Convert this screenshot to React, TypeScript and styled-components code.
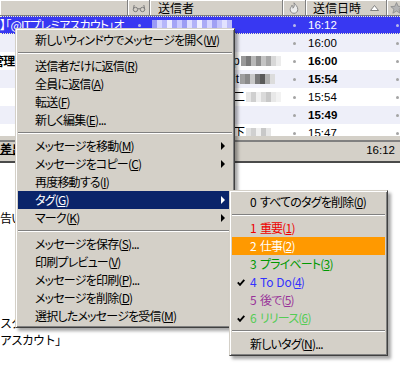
import React from "react";
import styled, { createGlobalStyle } from "styled-components";

const GlobalStyle = createGlobalStyle`
  html, body { margin: 0; padding: 0; background: #fff; }
  body { font-family: "Noto Sans CJK JP", "Noto Sans", sans-serif; }
`;

const COLS = "128px 22px 133px 23px 81px 20px";

const Screen = styled.div`
  position: relative;
  width: 400px;
  height: 372px;
  overflow: hidden;
  background: #fff;
  display: flex;
  flex-direction: column;
`;

const ThreadPane = styled.div`
  flex: none;
  height: 136px;
  overflow: hidden;
`;

const HeaderBar = styled.div`
  display: grid;
  grid-template-columns: ${COLS};
  height: 16px;
  box-sizing: border-box;
  background: #d4d0c8;
  border-bottom: 1px solid #808080;
`;

const HeaderCell = styled.div<{ $pad?: string; $justify?: string }>`
  display: flex;
  align-items: center;
  justify-content: ${(p) => p.$justify || "flex-start"};
  padding: ${(p) => p.$pad || "0 6px"};
  box-sizing: border-box;
  border-right: 1px solid #808080;
  box-shadow: inset 1px 1px 0 #fff;
  font-size: 12px;
  line-height: 15px;
  color: #000;
  white-space: nowrap;
  overflow: hidden;
`;

const Row = styled.div<{ $selected?: boolean; $tint?: boolean }>`
  display: grid;
  grid-template-columns: ${COLS};
  height: 18px;
  box-sizing: border-box;
  align-items: center;
  background: ${(p) => (p.$selected ? "#3838f2" : p.$tint ? "#eeeff9" : "#fff")};
  color: ${(p) => (p.$selected ? "#fff" : "#000")};
  border-top: 1px dotted ${(p) => (p.$selected ? "#f4f4c8" : "transparent")};
  border-bottom: 1px dotted ${(p) => (p.$selected ? "#f4f4c8" : "transparent")};
`;

const SubjectCell = styled.div<{ $bold?: boolean }>`
  overflow: hidden;
  white-space: nowrap;
  font-size: 12px;
  line-height: 16px;
  letter-spacing: -0.8px;
  font-weight: ${(p) => (p.$bold ? 700 : 400)};
  font-feature-settings: "palt";
`;

const SubjectText = styled.span<{ $shift?: number }>`
  display: inline-block;
  margin-left: ${(p) => p.$shift || 0}px;
`;

const DotCell = styled.div`
  display: flex;
  justify-content: center;
  align-items: center;
`;

const Dot = styled.span<{ $onBlue?: boolean }>`
  width: 3px;
  height: 3px;
  border-radius: 50%;
  background: ${(p) => (p.$onBlue ? "#b8b8e8" : "#a4a4a4")};
`;

const SenderCell = styled.div`
  display: flex;
  align-items: center;
  padding-left: 2px;
  overflow: hidden;
  white-space: nowrap;
  font-family: "Liberation Sans", "Noto Sans CJK JP", sans-serif;
  font-size: 12px;
  line-height: 16px;
`;

const Mosaic = styled.span`
  display: inline-flex;
  height: 10px;
`;

const Tile = styled.span<{ $c: string }>`
  width: 5px;
  height: 10px;
  background: ${(p) => p.$c};
`;

const SenderLetter = styled.span`
  color: #000;
  padding: 0 1px;
`;

const TimeCell = styled.div<{ $bold?: boolean }>`
  padding-left: 2px;
  font-family: "Liberation Sans", Arial, sans-serif;
  font-size: 11.5px;
  line-height: 16px;
  font-weight: ${(p) => (p.$bold ? 700 : 400)};
`;

const Splitter = styled.div`
  flex: none;
  height: 4px;
  background: #d4d0c8;
`;

const MessageHeader = styled.div`
  flex: none;
  height: 23px;
  box-sizing: border-box;
  background: #d4d0c8;
  border-top: 2px solid #808080;
  border-bottom: 2px solid #4a4a4a;
  display: flex;
  justify-content: space-between;
  align-items: flex-start;
`;

const FieldLabel = styled.span`
  font-size: 12px;
  font-weight: 700;
  line-height: 11px;
  padding-top: 1px;
  padding-right: 30px;
  border-bottom: 1px solid #000;
`;

const HeaderDate = styled.span`
  font-family: "Liberation Sans", Arial, sans-serif;
  font-size: 11.5px;
  line-height: 16px;
  padding: 0 5px 0 0;
`;

const MessageBody = styled.div`
  flex: 1;
  background: #fff;
  padding-top: 46px;
  font-size: 12px;
  line-height: 17px;
  letter-spacing: -1px;
  white-space: nowrap;
`;

const Para = styled.p<{ $gap?: number }>`
  margin: ${(p) => p.$gap || 0}px 0 0 0;
`;

/* ---------- menus ---------- */

const Menu = styled.div<{ $left: number; $top: number; $width: number }>`
  position: absolute;
  left: ${(p) => p.$left}px;
  top: ${(p) => p.$top}px;
  width: ${(p) => p.$width}px;
  box-sizing: border-box;
  padding: 2px;
  background: #d4d0c8;
  border: 1px solid;
  border-color: #d4d0c8 #404040 #404040 #d4d0c8;
  box-shadow: inset 1px 1px 0 #fff, inset -1px -1px 0 #808080,
    3px 3px 3px rgba(0, 0, 0, 0.35);
  font-family: "Noto Sans CJK JP", sans-serif;
  font-size: 12px;
  font-feature-settings: "palt";
  letter-spacing: -0.8px;
  line-height: 18px;
  color: #000;
`;

const Item = styled.div<{ $active?: boolean }>`
  display: flex;
  align-items: center;
  height: 18px;
  padding: 0 7px 0 17px;
  background: ${(p) => (p.$active ? "#0a246a" : "transparent")};
  color: ${(p) => (p.$active ? "#fff" : "#000")};
  white-space: nowrap;
`;

const ItemLabel = styled.span`
  flex: 1;
`;

const Arrow = styled.span<{ $light?: boolean }>`
  width: 0;
  height: 0;
  border-left: 4px solid ${(p) => (p.$light ? "#fff" : "#000")};
  border-top: 4px solid transparent;
  border-bottom: 4px solid transparent;
`;

const Separator = styled.div`
  margin: 3px 0;
  border-top: 1px solid #808080;
  border-bottom: 1px solid #fff;
`;

const TagItem = styled.div<{ $active?: boolean; $color: string }>`
  display: grid;
  grid-template-columns: 18px 1fr;
  align-items: center;
  height: 18px;
  background: ${(p) => (p.$active ? "#ff9900" : "transparent")};
  color: ${(p) => (p.$active ? "#fff" : p.$color)};
  white-space: nowrap;
`;

const TagNum = styled.span`
  margin-right: 4px;
`;

const Spaced = styled.span`
  letter-spacing: 0;
`;

const CheckSlot = styled.span`
  display: flex;
  justify-content: center;
  align-items: center;
`;

const Key = styled.u`
  text-underline-offset: 1px;
`;

/* ---------- icons ---------- */

const Glasses = () => (
  <svg width="14" height="10" viewBox="0 0 14 10">
    <g fill="none" stroke="#7c7c7c" strokeWidth="1">
      <circle cx="3.5" cy="6.5" r="2.2" />
      <circle cx="10.5" cy="6.5" r="2.2" />
      <path d="M5.7 6.2 Q7 4.8 8.3 6.2" />
      <path d="M1.3 6.3 L2.2 2" />
      <path d="M12.7 6.3 L11.8 2" />
    </g>
  </svg>
);

const Flame = () => (
  <svg width="10" height="12" viewBox="0 0 10 12">
    <path
      d="M5 0.8 C6.2 2.8 8.8 4.2 8.8 7.4 C8.8 9.8 7 11.3 5 11.3 C3 11.3 1.2 9.8 1.2 7.5 C1.2 5.6 2.6 4.8 3 3.2 C3.8 4.2 4 5 3.9 6.2 C5.2 5.2 5.6 3.2 5 0.8 Z"
      fill="#ececec"
      stroke="#8a8a8a"
      strokeWidth="1"
    />
  </svg>
);

const Star = () => (
  <svg width="13" height="12" viewBox="0 0 13 12">
    <polygon
      points="6.5,0.6 8.2,4.3 12.2,4.6 9.1,7.2 10.1,11.2 6.5,9 2.9,11.2 3.9,7.2 0.8,4.6 4.8,4.3"
      fill="#b4b4b4"
      stroke="#8a8a8a"
      strokeWidth="0.8"
    />
  </svg>
);

const SortUp = () => (
  <svg width="9" height="6" viewBox="0 0 9 6">
    <polygon points="0.5,5.5 4.5,0.5 8.5,5.5" fill="#fff" stroke="#808080" strokeWidth="1" />
  </svg>
);

const Check = () => (
  <svg width="8" height="7" viewBox="0 0 8 7">
    <path d="M0.8 3.4 L3 5.8 L7.3 0.9" fill="none" stroke="#000" strokeWidth="1.9" />
  </svg>
);

/* ---------- data ---------- */

type MenuEntry =
  | "sep"
  | { label: string; k: string; more?: boolean; sub?: boolean; active?: boolean };

const mainMenu: MenuEntry[] = [
  { label: "新しいウィンドウでメッセージを開く", k: "W" },
  "sep",
  { label: "送信者だけに返信", k: "R" },
  { label: "全員に返信", k: "A" },
  { label: "転送", k: "F" },
  { label: "新しく編集", k: "E", more: true },
  "sep",
  { label: "メッセージを移動", k: "M", sub: true },
  { label: "メッセージをコピー", k: "C", sub: true },
  { label: "再度移動する", k: "I" },
  { label: "タグ", k: "G", sub: true, active: true },
  { label: "マーク", k: "K", sub: true },
  "sep",
  { label: "メッセージを保存", k: "S", more: true },
  { label: "印刷プレビュー", k: "V" },
  { label: "メッセージを印刷", k: "P", more: true },
  { label: "メッセージを削除", k: "D" },
  { label: "選択したメッセージを受信", k: "M" },
];

type TagEntry =
  | "sep"
  | { num?: string; label: string; k: string; color: string; active?: boolean; checked?: boolean; more?: boolean };

const tagMenu: TagEntry[] = [
  { num: "0", label: "すべてのタグを削除", k: "0", color: "#000" },
  "sep",
  { num: "1", label: "重要", k: "1", color: "#ee0000" },
  { num: "2", label: "仕事", k: "2", color: "#ff9900", active: true },
  { num: "3", label: "プライベート", k: "3", color: "#009900" },
  { num: "4", label: "To Do", k: "4", color: "#3333ff", checked: true },
  { num: "5", label: "後で", k: "5", color: "#993399" },
  { num: "6", label: "リリース", k: "6", color: "#55cc55", checked: true },
  "sep",
  { label: "新しいタグ", k: "N", color: "#000", more: true },
];

const blueTiles = [
  "#9a9af6", "#d6d6ff", "#b6b6fa", "#ececff", "#a4a4f6", "#cacaff", "#9c9cf4", "#dedeff",
  "#b2b2f8", "#eeeeff", "#aaaaf6", "#d6d6ff", "#a0a0f4", "#c4c4fc", "#e2e2ff", "#bcbcfa",
];
const lead = Array.from({ length: 16 }, (_, i) => (i % 3 === 0 ? "#c8c8c8" : i % 3 === 1 ? "#e4e4e4" : "#d2d2d2"));

type RowData = {
  subject?: string;
  shift?: number;
  time: string;
  bold?: boolean;
  tint?: boolean;
  selected?: boolean;
  lead?: string[];
  letter?: string;
  trail?: string[];
};

const rows: RowData[] = [
  { subject: "】「@ITプレミアスカウト」オ", time: "16:12", selected: true, lead: blueTiles },
  { time: "16:00", tint: true, lead: lead.slice(0, 10) },
  {
    subject: "管理",
    shift: -8,
    time: "16:00",
    bold: true,
    lead,
    letter: "p",
    trail: ["#9a9a9a", "#7a7a7a", "#b8b8b8", "#8c8c8c", "#c4c4c4", "#a8a8a8", "#d8d8d8", "#ececec"],
  },
  {
    time: "15:54",
    bold: true,
    tint: true,
    lead,
    letter: "it",
    trail: ["#a0a0a0", "#8a8a8a", "#c8c8c8", "#7a7a7a", "#5a5a5a", "#b0b0b0", "#dcdcdc"],
  },
  {
    time: "15:54",
    lead,
    letter: "二",
    trail: ["#e6e6e6", "#cfcfcf", "#f0f0f0", "#dadada", "#c8c8c8", "#e8e8e8", "#f2f2f2"],
  },
  { time: "15:49", bold: true, tint: true, lead: lead.slice(0, 12) },
  {
    time: "15:47",
    lead,
    letter: "下",
    trail: ["#e2e2e2", "#d0d0d0", "#f0f0f0", "#c8c8c8", "#e6e6e6"],
  },
];

/* ---------- app ---------- */

export default function App() {
  return (
    <Screen>
      <GlobalStyle />
      <ThreadPane>
        <HeaderBar>
          <HeaderCell />
          <HeaderCell $justify="center" $pad="0">
            <Glasses />
          </HeaderCell>
          <HeaderCell $pad="0 0 0 8px">送信者</HeaderCell>
          <HeaderCell $justify="center" $pad="0">
            <Flame />
          </HeaderCell>
          <HeaderCell $justify="space-between" $pad="0 7px 0 7px">
            <span>送信日時</span>
            <SortUp />
          </HeaderCell>
          <HeaderCell $justify="center" $pad="0">
            <Star />
          </HeaderCell>
        </HeaderBar>
        {rows.map((r, i) => (
          <Row key={i} $selected={r.selected} $tint={r.tint}>
            <SubjectCell $bold={r.bold}>
              {r.subject && <SubjectText $shift={r.shift}>{r.subject}</SubjectText>}
            </SubjectCell>
            <DotCell>{r.selected && <Dot $onBlue />}</DotCell>
            <SenderCell>
              <Mosaic>
                {(r.lead || []).map((c, j) => (
                  <Tile key={j} $c={c} />
                ))}
              </Mosaic>
              {r.letter && <SenderLetter>{r.letter}</SenderLetter>}
              <Mosaic>
                {(r.trail || []).map((c, j) => (
                  <Tile key={j} $c={c} />
                ))}
              </Mosaic>
            </SenderCell>
            <DotCell>
              <Dot $onBlue={r.selected} />
            </DotCell>
            <TimeCell $bold={r.bold}>{r.time}</TimeCell>
            <DotCell>
              <Dot $onBlue={r.selected} />
            </DotCell>
          </Row>
        ))}
      </ThreadPane>
      <Splitter />
      <MessageHeader>
        <FieldLabel>差出人</FieldLabel>
        <HeaderDate>16:12</HeaderDate>
      </MessageHeader>
      <MessageBody>
        <Para>告い</Para>
        <Para $gap={88}>スタ</Para>
        <Para>アスカウト」</Para>
      </MessageBody>

      <Menu $left={15} $top={28} $width={220}>
        {mainMenu.map((m, i) =>
          m === "sep" ? (
            <Separator key={i} />
          ) : (
            <Item key={i} $active={m.active}>
              <ItemLabel>
                {m.label}(<Key>{m.k}</Key>){m.more ? "..." : ""}
              </ItemLabel>
              {m.sub && <Arrow $light={m.active} />}
            </Item>
          )
        )}
      </Menu>

      <Menu $left={229} $top={190} $width={159}>
        {tagMenu.map((t, i) =>
          t === "sep" ? (
            <Separator key={i} />
          ) : (
            <TagItem key={i} $active={t.active} $color={t.color}>
              <CheckSlot>{t.checked && <Check />}</CheckSlot>
              <span>
                {t.num && <TagNum>{t.num}</TagNum>}
                {t.label === "To Do" ? <Spaced>To Do</Spaced> : t.label}(<Key>{t.k}</Key>)
                {t.more ? "..." : ""}
              </span>
            </TagItem>
          )
        )}
      </Menu>
    </Screen>
  );
}
